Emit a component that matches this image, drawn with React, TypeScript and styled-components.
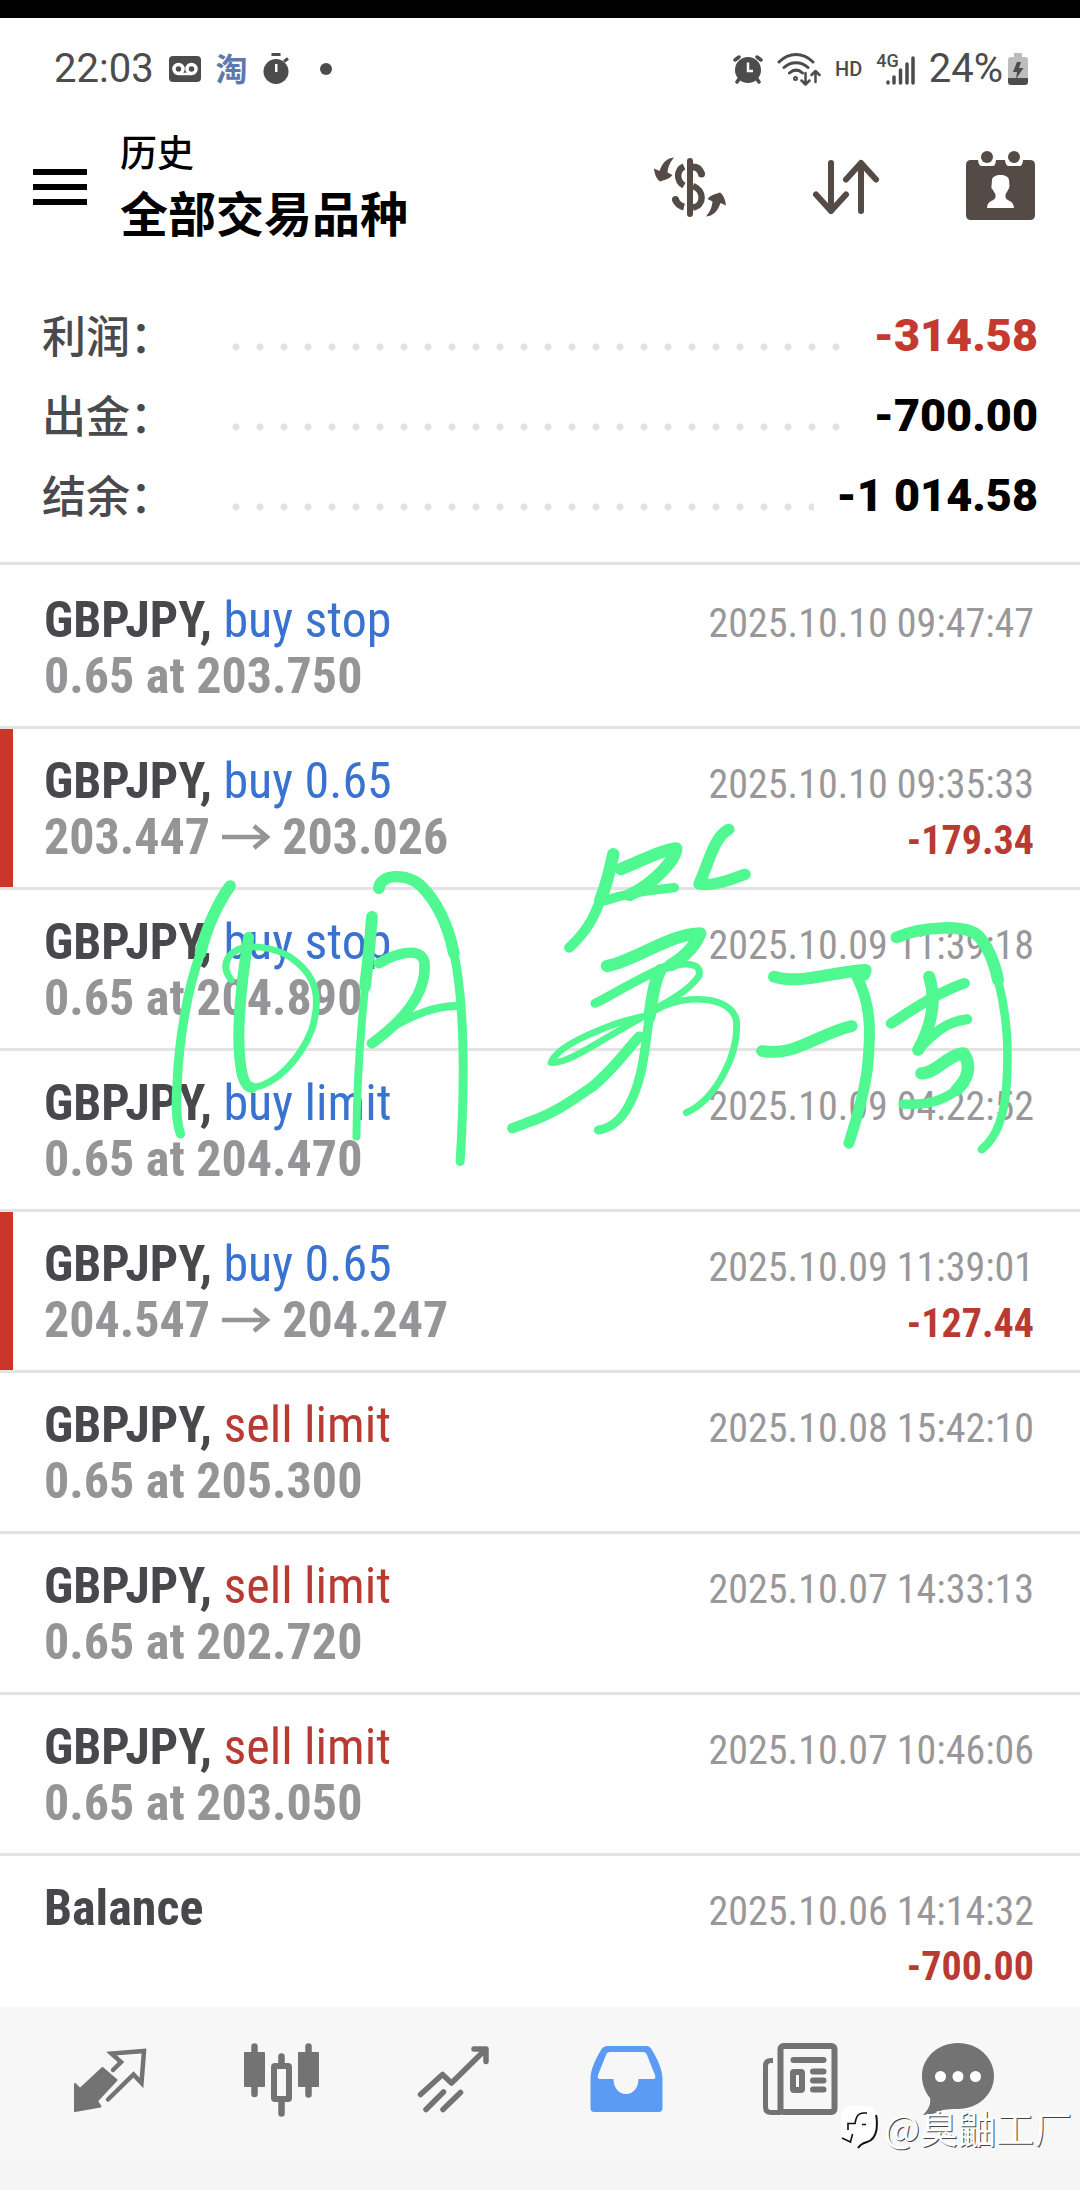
import React from 'react';
import styled, { createGlobalStyle } from 'styled-components';

const GlobalStyle = createGlobalStyle`
  * { box-sizing: border-box; }
  body {
    margin: 0;
    background: #fff;
    font-family: Roboto, "Noto Sans CJK SC", sans-serif;
  }
  button { border: 0; padding: 0; background: none; font: inherit; cursor: pointer; }
`;

const Page = styled.div`
  display: flex;
  flex-direction: column;
  min-height: 100vh;
  border-top: 18px solid #000;
`;

const StatusBar = styled.div`
  display: flex;
  justify-content: space-between;
  align-items: center;
  height: 98px;
  padding: 3px 52px 0 54px;
  color: #4c4c4c;
`;

const StatusGroup = styled.div<{ $gap: number }>`
  display: flex;
  align-items: center;
  gap: ${(p) => p.$gap}px;
`;

const StatusText = styled.span`
  font-size: 40px;
  line-height: 48px;
`;

const Battery = styled.span`
  display: flex;
  align-items: center;
  gap: 5px;
`;

const SmallTag = styled.span`
  font-size: 20px;
  line-height: 24px;
  font-weight: 500;
`;

const AppTag = styled.span`
  padding-bottom: 4px;
  font: 700 32px/36px "Noto Sans CJK SC", sans-serif;
  color: #5c79ad;
`;

const Header = styled.header`
  display: flex;
  align-items: center;
  height: 142px;
  padding: 0 28px 0 33px;
`;

const MenuButton = styled.button`
  display: flex;
  flex-direction: column;
  gap: 9px;
  width: 54px;
`;

const MenuLine = styled.span`
  height: 6px;
  background: #000;
`;

const Titles = styled.div`
  flex: 1;
  margin-left: 33px;
  padding-bottom: 8px;
  color: #000;
  font-family: "Noto Sans CJK SC", sans-serif;
`;

const Subtitle = styled.div`
  font-size: 37px;
  line-height: 56px;
  font-weight: 500;
`;

const Title = styled.h1`
  margin: 0;
  font-size: 48px;
  line-height: 64px;
  font-weight: 700;
`;

const Tools = styled.div`
  display: flex;
  gap: 56px;
`;

const IconButton = styled.button`
  display: block;
  width: 100px;
  height: 100px;
  color: #544b47;
`;

const Summary = styled.dl`
  margin: 0;
  padding: 38px 42px 26px;
  border-bottom: 3px solid #e3e3e3;
`;

const SummaryRow = styled.div`
  display: flex;
  align-items: center;
  height: 80px;
`;

const SummaryLabel = styled.dt`
  width: 182px;
  padding-bottom: 4px;
  color: #4a494c;
  font: 500 44px/64px "Noto Sans CJK SC", sans-serif;
`;

const Leader = styled.span`
  flex: 1;
  height: 8px;
  margin: 22px 22px 0 0;
  background: radial-gradient(circle, #e2e2e2 3px, transparent 4px) 0 0 / 24px 8px repeat-x;
`;

const SummaryValue = styled.dd<{ $loss?: boolean }>`
  margin: 0;
  font-size: 45px;
  line-height: 56px;
  font-weight: 900;
  color: ${(p) => (p.$loss ? '#c53a2f' : '#000')};
`;

const ListArea = styled.main`
  position: relative;
  flex: 1;
  padding-top: 3px;
`;

const DealList = styled.ul`
  margin: 0;
  padding: 0;
  list-style: none;
  font-family: "Roboto Condensed", Roboto, sans-serif;
`;

const DealRow = styled.li<{ $closed?: boolean }>`
  display: grid;
  grid-template-columns: 1fr auto;
  grid-auto-rows: 56px;
  align-items: baseline;
  padding: 24px 46px 22px 44px;
  border-bottom: 3px solid #e3e3e3;
  background: linear-gradient(#cb352a, #cb352a) 0 0 / ${(p) => (p.$closed ? 13 : 0)}px 100% no-repeat;
  background-clip: padding-box;
  &:last-child {
    padding-bottom: 15px;
    border-bottom: 0;
  }
`;

const Symbol = styled.div`
  font-size: 50px;
  line-height: 56px;
  font-weight: 700;
  color: #48474b;
`;

const Side = styled.span<{ $sell?: boolean }>`
  font-weight: 400;
  color: ${(p) => (p.$sell ? '#b93a33' : '#3a72d0')};
`;

const Price = styled.div`
  display: flex;
  align-items: center;
  gap: 12px;
  font-size: 50px;
  line-height: 56px;
  font-weight: 700;
  color: #959597;
`;

const Time = styled.time`
  font-size: 40px;
  line-height: 56px;
  text-align: right;
  color: #98989a;
`;

const Profit = styled.div`
  grid-column: 2;
  font-size: 40px;
  line-height: 62px;
  font-weight: 700;
  text-align: right;
  color: #b93a33;
`;

const Ink = styled.svg`
  position: absolute;
  left: 0;
  top: 155px;
  width: 100%;
  height: 480px;
  fill: none;
  stroke: #4ff890;
  stroke-linecap: round;
  stroke-linejoin: round;
  pointer-events: none;
`;

const Footer = styled.footer`
  position: relative;
  background: #f7f7f7;
  border-bottom: 29px solid #f5f5f5;
`;

const Tabs = styled.nav`
  display: flex;
  height: 154px;
  padding: 0 24px 8px;
`;

const Tab = styled.button<{ $active?: boolean }>`
  flex: 1;
  display: flex;
  align-items: center;
  justify-content: center;
  color: ${(p) => (p.$active ? '#5b9af5' : '#737373')};
`;

const Watermark = styled.div`
  position: absolute;
  right: 8px;
  bottom: 6px;
  display: flex;
  align-items: center;
  gap: 6px;
  color: #fff;
  font: 400 38px/56px "Noto Sans CJK SC", sans-serif;
  text-shadow: 1px 1px 0 #444;
`;

const DollarIcon = () => (
  <svg width="100" height="100" viewBox="0 0 100 100" fill="none" stroke="currentColor" strokeWidth="7">
    <path d="M50 24V77" strokeWidth="6" strokeLinecap="round" />
    <path d="M53 30C57 30 60 32 61.500 37" />
    <circle cx="61.500" cy="37" r="3.500" fill="currentColor" stroke="none" />
    <path d="M44 29.500C36.500 33 36 44 44 48.500" strokeWidth="6.500" />
    <path d="M53 49C64.500 53 64.500 69 53 70.500" strokeWidth="6.500" />
    <path d="M44 70C40 69 37 67 35.500 62.500" />
    <circle cx="35.500" cy="62.500" r="3.500" fill="currentColor" stroke="none" />
    <g fill="currentColor" stroke="none">
      <path d="M34 20.500C26 21 22 27 19.500 34L14 31.500C14.500 37 16.500 42 20 44.500C24 43 28 43 32.500 38L27.500 35.500C28 29 31 24 34 20.500Z" />
      <path transform="rotate(180 50 50)" d="M34 20.500C26 21 22 27 19.500 34L14 31.500C14.500 37 16.500 42 20 44.500C24 43 28 43 32.500 38L27.500 35.500C28 29 31 24 34 20.500Z" />
    </g>
  </svg>
);

const SortIcon = () => (
  <svg width="100" height="100" viewBox="0 0 100 100" fill="none" stroke="currentColor" strokeWidth="6" strokeLinecap="round" strokeLinejoin="round">
    <path d="M35 26V74M20 57.500L35 74L50 57.500M65 74V26M50 42.500L65 26L80 42.500" />
  </svg>
);

const CalendarIcon = () => (
  <svg width="100" height="100" viewBox="0 0 100 100" fill="currentColor">
    <path d="M19 23H26C26.500 27 27.500 29 30 29H40C43 29 43.500 27 44 23H53C53.500 27 54.500 29 57 29H67C70 29 70.500 27 71 23H78Q83 23 83 28V78Q83 83 78 83H19Q14 83 14 78V28Q14 23 19 23Z" />
    <circle cx="35" cy="20" r="6" />
    <circle cx="62" cy="20" r="6" />
    <path fill="#fff" d="M40 43C40 40 44 38 48.500 38C53 38 57 40 57 43L57.500 49C57.500 51 56.500 52 56 53C55.500 55 53.500 56 53.500 58V60C53.500 64 62 63 62 71H35C35 63 43.500 64 43.500 60V58C43.500 56 41.500 55 41 53C40 52 39 51 39.500 49Z" />
  </svg>
);

const TradeIcon = () => (
  <svg width="100" height="100" viewBox="0 0 100 100" fill="none" stroke="currentColor" strokeWidth="4.500" strokeLinecap="round">
    <path fill="currentColor" strokeWidth="2" strokeLinejoin="round" d="M15 54L20 59L42.500 38L56.500 50L37 71L40.500 76.500L15 81Z" />
    <path d="M53 40L61 32L51.500 23.500L84 21L81.500 53L73.500 44.500L48 69.500" />
  </svg>
);

const CandlesIcon = () => (
  <svg width="100" height="100" viewBox="0 0 100 100" fill="none" stroke="currentColor" strokeWidth="6.500" strokeLinecap="round">
    <path d="M22.500 16.500V64M76.500 16.500V64.500M49.500 26.500V34M49.500 72V83.500" />
    <rect x="13" y="23" width="19" height="33" fill="currentColor" strokeWidth="2" strokeLinejoin="round" />
    <rect x="67" y="23" width="19" height="33" fill="currentColor" strokeWidth="2" strokeLinejoin="round" />
    <rect x="42" y="36" width="15" height="33" rx="1" strokeWidth="6" />
  </svg>
);

const TrendIcon = () => (
  <svg width="100" height="100" viewBox="0 0 100 100" fill="none" stroke="currentColor" strokeWidth="5.500" strokeLinecap="round" strokeLinejoin="round">
    <path d="M16.500 64.500L38.500 44.500L47.500 53L81 20M70 19H82V31.500M22 79.500L39.500 62M39 79.500L56.500 62.500" />
  </svg>
);

const InboxIcon = () => (
  <svg width="100" height="100" viewBox="0 0 100 100" fill="currentColor" fillRule="evenodd">
    <path d="M32 16H70Q74 16 76 20C82 30 86.500 40 86.500 49V78Q86.500 82 82.500 82H18.500Q14.500 82 14.500 78V49C14.500 40 19 30 25 20Q27 16 32 16ZM34 22Q31 22 30 25L22 45Q21 49 24 49H37.500C37.500 57 42 64 50 64C58 64 62.500 57 62.500 49H77Q80.500 49 79 45L71 25Q70 22 67 22Z" />
  </svg>
);

const NewsIcon = () => (
  <svg width="100" height="100" viewBox="0 0 100 100" fill="none" stroke="currentColor" strokeWidth="6" strokeLinecap="round">
    <rect x="32.500" y="16" width="54" height="66" rx="3" />
    <path strokeLinecap="butt" strokeWidth="5" d="M25 30.500H23Q17.500 30.500 17.500 36V77Q17.500 82.500 23 82.500H33" />
    <path d="M45.500 30H75.500M65 41.500H75.500M65 50.500H75.500M65 59.500H75.500" />
    <rect x="45" y="42" width="9" height="18" rx="1" />
  </svg>
);

const ChatIcon = () => (
  <svg width="100" height="100" viewBox="0 0 100 100" fill="currentColor">
    <path d="M38 13C58 13 74 27.500 74 46C74 64.500 58 79 38 79C32 79 28 79 23 80C17 82 13 85 3 85C9 79 11 74 10 68C5 62 2 54 2 46C2 27.500 18 13 38 13Z" />
    <g fill="#fff">
      <circle cx="20.500" cy="46.500" r="5.500" />
      <circle cx="38" cy="46.500" r="5.500" />
      <circle cx="55.500" cy="46.500" r="5.500" />
    </g>
  </svg>
);

const RecorderIcon = () => (
  <svg width="32" height="26" viewBox="0 0 32 26">
    <rect width="32" height="26" rx="4" fill="#4c4c4c" />
    <g fill="none" stroke="#fff" strokeWidth="3.500">
      <circle cx="9.500" cy="13" r="4.500" />
      <circle cx="22.500" cy="13" r="4.500" />
      <path d="M10 18H22" strokeWidth="2.500" />
    </g>
  </svg>
);

const TimerIcon = () => (
  <svg width="26" height="32" viewBox="0 0 26 32" fill="#4c4c4c">
    <circle cx="13" cy="18.500" r="12.500" />
    <rect x="8.500" y="0" width="9" height="3" />
    <path d="M21 8.500L25 5.500" stroke="#4c4c4c" strokeWidth="3" />
    <rect x="12" y="11" width="2.500" height="8" fill="#fff" />
  </svg>
);

const MoreDot = styled.span`
  width: 12px;
  height: 12px;
  margin-left: 16px;
  border-radius: 50%;
  background: #4c4c4c;
`;

const AlarmIcon = () => (
  <svg width="30" height="30" viewBox="0 0 30 30" fill="none" stroke="#4c4c4c" strokeWidth="3.500" strokeLinecap="round">
    <circle cx="15" cy="16" r="13" fill="#4c4c4c" stroke="none" />
    <path d="M2 6L6 3M28 6L24 3M6 25L4 28M24 25L26 28" />
    <path d="M15 8.500V17H20" stroke="#fff" strokeWidth="2.500" strokeLinecap="butt" />
  </svg>
);

const WifiIcon = () => (
  <svg width="44" height="34" viewBox="0 0 44 34" fill="none" stroke="#4c4c4c" strokeWidth="3" strokeLinecap="round" strokeLinejoin="round">
    <path d="M2 10C12 0 26 0 36 10M7 15.500C14 9 24 9 31 15.500M12.500 21C17 17 21 17 25.500 21" />
    <circle cx="18.500" cy="26.500" r="1" />
    <path d="M28.500 21V32M24.500 28.500L28.500 32.500L32.500 28.500M38.500 30V19M34.500 23L38.500 19L42.500 23" strokeWidth="2.500" />
  </svg>
);

const Signal = styled.span`
  display: flex;
  align-items: flex-end;
  height: 32px;
`;

const NetworkTag = styled.span`
  align-self: flex-start;
  margin-right: -13px;
  font-size: 18px;
  line-height: 16px;
  font-weight: 500;
`;

const BarsIcon = () => (
  <svg width="29" height="30" viewBox="0 0 29 30" stroke="#4c4c4c" strokeWidth="3.500" strokeLinecap="round">
    <path d="M2 27V28M8 22V28M14.500 15V28M21 9V28M27 3V28" />
  </svg>
);

const BatteryIcon = () => (
  <svg width="20" height="32" viewBox="0 0 20 32">
    <path fill="#bdbdbd" d="M6 0H14V4H17Q20 4 20 7V26H0V7Q0 4 3 4H6Z" />
    <path fill="#4c4c4c" d="M0 25H20V29Q20 32 17 32H3Q0 32 0 29Z" />
    <path fill="#4c4c4c" d="M9 9H13L11 15H15.500L8 26L9 19H5Z" />
  </svg>
);

const WatermarkLogo = () => (
  <svg width="38" height="44" viewBox="0 0 38 44">
    <path fill="#fff" d="M12 1H26Q37 1 37 12V24C37 32 32 36 28 37C23 38 22 40 18 43L17 38H12Q1 38 1 27V12Q1 1 12 1Z" />
    <g fill="none" stroke="#111" strokeWidth="1.600">
      <path d="M27 8H24C17 8 16 13 15 18.500H8V25M22 19.500H26M12.500 29C12 32 11 34 10.500 37L2 33" />
      <path d="M36 10C37.500 15 37 20 36.500 25C35 32 31 36 27 37C23 38 20 40 18 43" strokeWidth="2" />
    </g>
  </svg>
);

const summary = [
  { label: '利润：', value: '-314.58', loss: true },
  { label: '出金：', value: '-700.00' },
  { label: '结余：', value: '-1 014.58' },
];

type Deal = { symbol: string; side?: string; price?: string; to?: string; time: string; profit?: string };

const deals: Deal[] = [
  { symbol: 'GBPJPY,', side: 'buy stop', price: '0.65 at 203.750', time: '2025.10.10 09:47:47' },
  { symbol: 'GBPJPY,', side: 'buy 0.65', price: '203.447', to: '203.026', time: '2025.10.10 09:35:33', profit: '-179.34' },
  { symbol: 'GBPJPY,', side: 'buy stop', price: '0.65 at 204.890', time: '2025.10.09 11:39:18' },
  { symbol: 'GBPJPY,', side: 'buy limit', price: '0.65 at 204.470', time: '2025.10.09 04:22:52' },
  { symbol: 'GBPJPY,', side: 'buy 0.65', price: '204.547', to: '204.247', time: '2025.10.09 11:39:01', profit: '-127.44' },
  { symbol: 'GBPJPY,', side: 'sell limit', price: '0.65 at 205.300', time: '2025.10.08 15:42:10' },
  { symbol: 'GBPJPY,', side: 'sell limit', price: '0.65 at 202.720', time: '2025.10.07 14:33:13' },
  { symbol: 'GBPJPY,', side: 'sell limit', price: '0.65 at 203.050', time: '2025.10.07 10:46:06' },
  { symbol: 'Balance', time: '2025.10.06 14:14:32', profit: '-700.00' },
];

const PriceArrow = () => (
  <svg width="48" height="28" viewBox="0 0 48 28" fill="none" stroke="currentColor" strokeWidth="4.500">
    <path d="M0 14H45M32 3L45 14L32 25" />
  </svg>
);

const leftStrokes: [number, string][] = [
  [34, 'M668 498C635 545 600 620 582 700'],
  [27, 'M582 700C545 800 520 960 515 1080C510 1150 510 1200 524 1242'],
  [32, 'M722 652C708 740 690 860 694 980C698 1060 708 1100 732 1103'],
  [20, 'M732 1103C800 1095 870 1020 905 930C935 830 915 770 860 725C810 680 700 660 665 710C645 740 660 765 672 780'],
  [34, 'M1080 590C1076 650 1068 730 1060 800'],
  [23, 'M1062 780C1050 900 1036 1060 1035 1250'],
  [34, 'M1100 505C1105 460 1180 460 1220 495C1270 545 1300 610 1318 700'],
  [26, 'M1318 700C1350 850 1350 1100 1336 1325'],
  [31, 'M1100 730C1140 705 1220 675 1232 725C1240 800 1200 880 1080 970'],
  [24, 'M1150 915C1210 880 1270 855 1335 858'],
  [31, 'M1488 1225L1530 1208C1600 1185 1650 1150 1720 1100C1780 1050 1820 990 1856 950'],
];

const rightStrokes: [number, string][] = [
  [36, 'M213 402C205 440 195 490 175 540'],
  [30, 'M175 540C155 600 130 640 85 683'],
  [37, 'M235 447C290 425 350 390 395 385C395 420 330 490 260 525'],
  [28, 'M190 542C250 520 320 510 390 503'],
  [34, 'M548 328C505 350 490 430 462 492C500 500 550 480 595 463'],
  [37, 'M195 738C270 725 380 640 465 640C450 680 420 710 380 735'],
  [27, 'M380 735C300 765 220 820 160 850'],
  [20, 'M370 745C430 720 475 735 460 770C440 800 400 830 345 860'],
  [36, 'M350 750C330 790 325 840 318 890'],
  [27, 'M318 890C305 980 300 1060 270 1130C245 1190 215 1222 170 1230'],
  [20, 'M320 885C230 900 50 970 32 1028C90 1030 170 960 345 865'],
  [20, 'M345 865C430 820 555 830 570 900C580 1000 510 1140 425 1178'],
  [36, 'M680 770C750 795 850 755 945 750L940 765'],
  [32, 'M920 770C965 860 960 950 950 1050C940 1130 915 1210 897 1270'],
  [35, 'M645 993C740 1010 800 945 905 918'],
  [35, 'M1035 652C1110 620 1240 610 1275 650C1300 680 1320 730 1330 780'],
  [25, 'M1330 780C1360 900 1360 1000 1355 1090C1350 1180 1330 1250 1283 1288'],
  [32, 'M1020 910C1080 870 1150 820 1232 790'],
  [35, 'M1130 770C1155 850 1130 930 1098 990'],
  [30, 'M1098 990C1140 940 1180 905 1240 898'],
  [37, 'M1108 1060C1150 1060 1190 1000 1230 1000C1255 1040 1240 1080 1210 1110'],
  [29, 'M1210 1110C1160 1150 1110 1155 1055 1152'],
];

const tabs = [
  { name: '行情', icon: <TradeIcon /> },
  { name: '图表', icon: <CandlesIcon /> },
  { name: '交易', icon: <TrendIcon /> },
  { name: '历史', icon: <InboxIcon />, active: true },
  { name: '新闻', icon: <NewsIcon /> },
  { name: '消息', icon: <ChatIcon /> },
];

export default function App() {
  return (
    <>
      <GlobalStyle />
      <Page>
        <StatusBar>
          <StatusGroup $gap={15}>
            <StatusText>22:03</StatusText>
            <RecorderIcon />
            <AppTag>淘</AppTag>
            <TimerIcon />
            <MoreDot />
          </StatusGroup>
          <StatusGroup $gap={14}>
            <AlarmIcon />
            <WifiIcon />
            <SmallTag>HD</SmallTag>
            <Signal>
              <NetworkTag>4G</NetworkTag>
              <BarsIcon />
            </Signal>
            <Battery>
              <StatusText>24%</StatusText>
              <BatteryIcon />
            </Battery>
          </StatusGroup>
        </StatusBar>

        <Header>
          <MenuButton aria-label="菜单">
            <MenuLine />
            <MenuLine />
            <MenuLine />
          </MenuButton>
          <Titles>
            <Subtitle>历史</Subtitle>
            <Title>全部交易品种</Title>
          </Titles>
          <Tools>
            <IconButton aria-label="品种"><DollarIcon /></IconButton>
            <IconButton aria-label="排序"><SortIcon /></IconButton>
            <IconButton aria-label="日期"><CalendarIcon /></IconButton>
          </Tools>
        </Header>

        <Summary>
          {summary.map((s) => (
            <SummaryRow key={s.label}>
              <SummaryLabel>{s.label}</SummaryLabel>
              <Leader />
              <SummaryValue $loss={s.loss}>{s.value}</SummaryValue>
            </SummaryRow>
          ))}
        </Summary>

        <ListArea>
          <DealList>
            {deals.map((d) => (
              <DealRow key={d.time} $closed={!!d.to}>
                <Symbol>
                  {d.symbol} {d.side && <Side $sell={d.side.startsWith('sell')}>{d.side}</Side>}
                </Symbol>
                <Time>{d.time}</Time>
                {d.price && (
                  <Price>
                    <span>{d.price}</span>
                    {d.to && <PriceArrow />}
                    {d.to && <span>{d.to}</span>}
                  </Price>
                )}
                {d.profit && <Profit>{d.profit}</Profit>}
              </DealRow>
            ))}
          </DealList>
          <Ink viewBox="0 0 3136 1440" preserveAspectRatio="none" aria-hidden="true">
            {leftStrokes.map(([w, d]) => (
              <path key={d} d={d} strokeWidth={w} />
            ))}
            <g transform="translate(1568 0)">
              {rightStrokes.map(([w, d]) => (
                <path key={d} d={d} strokeWidth={w} />
              ))}
            </g>
          </Ink>
        </ListArea>

        <Footer>
          <Tabs>
            {tabs.map((t) => (
              <Tab key={t.name} aria-label={t.name} $active={t.active}>
                {t.icon}
              </Tab>
            ))}
          </Tabs>
          <Watermark>
            <WatermarkLogo />
            <span>@臭鼬工厂</span>
          </Watermark>
        </Footer>
      </Page>
    </>
  );
}
